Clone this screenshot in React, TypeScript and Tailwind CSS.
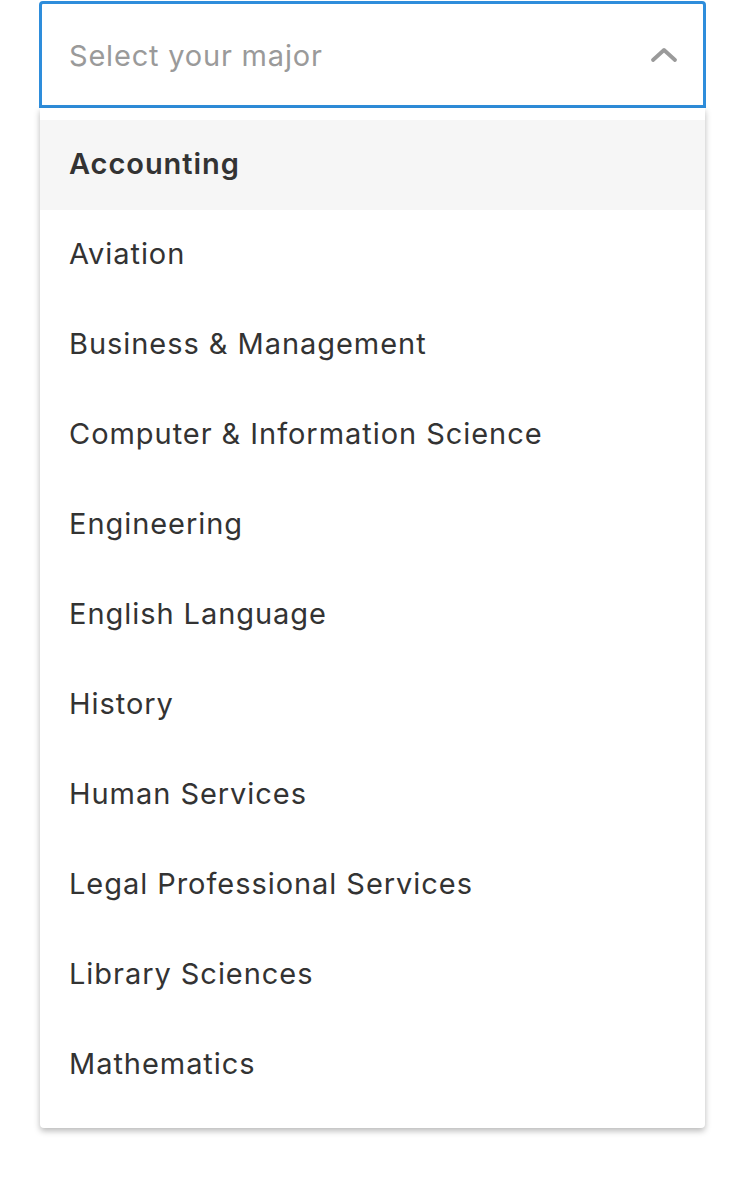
import { useState } from "react";

const majors = [
    "Accounting",
    "Aviation",
    "Business & Management",
    "Computer & Information Science",
    "Engineering",
    "English Language",
    "History",
    "Human Services",
    "Legal Professional Services",
    "Library Sciences",
    "Mathematics",
];

export default function App() {
    const [active] = useState(0);

    return (
        <div className="min-h-[1198px] bg-white pt-px" style={{ fontFamily: "Inter, 'Noto Sans', sans-serif" }}>
            <div className="ml-[39px] w-[667px]">
                <div className="flex h-[107px] items-center justify-between rounded-t-[4px] border-[3px] border-[#2e8ddb] bg-white pl-[27px] pr-[25px]">
                    <span className="mt-[3px] text-[29px] tracking-[0.8px] text-[#9a9a9a]">Select your major</span>
                    <svg width="28" height="18" viewBox="0 0 28 18" fill="none">
                        <path d="M3 14 L14 4 L25 14" stroke="#9a9a9a" strokeWidth="3.8" strokeLinecap="round" strokeLinejoin="round" />
                    </svg>
                </div>
                <ul className="mx-px rounded-b-[4px] bg-white pt-[12px] pb-[18px] shadow-[0_3px_6px_rgba(0,0,0,0.28)]">
                    {majors.map((m, i) => (
                        <li
                            key={m}
                            className={
                                "flex h-[90px] items-center px-[29px] pb-[2px] text-[29px] tracking-[0.95px] text-[#333333] " +
                                (i === active ? "bg-[#f6f6f6] font-semibold" : "")
                            }
                        >
                            {m}
                        </li>
                    ))}
                </ul>
            </div>
        </div>
    );
}
